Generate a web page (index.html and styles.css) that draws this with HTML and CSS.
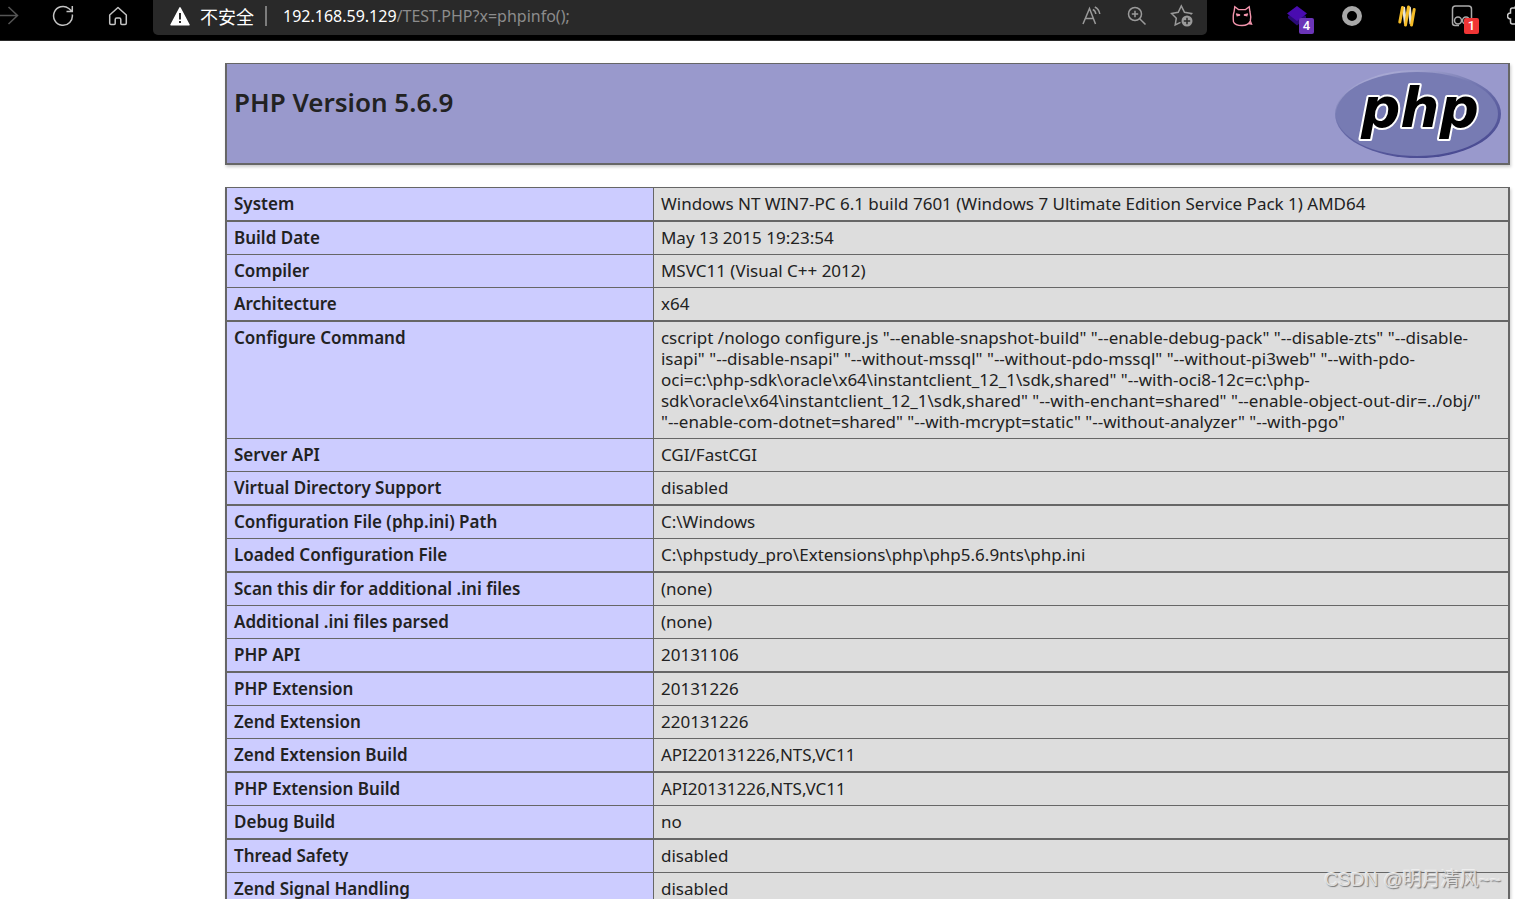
FILE: index.html
```html
<!DOCTYPE html>
<html lang="zh-CN">
<head>
<meta charset="utf-8">
<title>phpinfo()</title>
<link rel="stylesheet" href="styles.css">
</head>
<body>
<header class="toolbar">
  <nav class="nav">
    <button class="nav-btn forward" aria-label="前进"><svg width="20" height="20" viewBox="0 0 20 20"><path d="M-2 9.500H17.500M8.500 1L17.500 9.500L8.500 18" stroke="#555"/></svg></button>
    <button class="nav-btn reload" aria-label="刷新"><svg width="22" height="22" viewBox="0 0 22 22"><path d="M20.300 9.500A9.400 9.400 0 1 1 16.800 3.500L20 6.300M20.300 1V6.500H14.500"/></svg></button>
    <button class="nav-btn home" aria-label="主页"><svg width="20" height="20" viewBox="0 0 20 20"><path d="M10 1.500L1.700 9V17.300Q1.700 18.500 2.900 18.500H6.200Q7.200 18.500 7.200 17.500V13.500Q7.200 12 8.700 12H11.300Q12.800 12 12.800 13.500V17.500Q12.800 18.500 13.800 18.500H17.100Q18.300 18.500 18.300 17.300V9Z" stroke-linejoin="round"/></svg></button>
  </nav>
  <div class="address">
    <svg class="warning" width="20" height="19" viewBox="0 0 20 19"><path d="M10 0.800L19 17.800H1Z" fill="#fff" stroke="#fff" stroke-width="1.500" stroke-linejoin="round"/><path d="M10 6V12.500M10 14V16" stroke="#292929" stroke-width="2"/></svg>
    <span class="insecure">不安全</span>
    <span class="divider"></span>
    <label class="host" for="url">192.168.59.129</label>
    <input class="path" id="url" type="text" value="/TEST.PHP?x=phpinfo();">
    <button class="field-btn" aria-label="大声朗读"><svg width="22" height="20" viewBox="0 0 22 20"><path d="M2 18L8.500 2.500L14.500 18M4.200 12.500H12.500M11.800 3.500Q14.500 4.800 14.800 8M13.800 1Q18 3 18.800 8"/></svg></button>
    <button class="field-btn" aria-label="缩放"><svg width="20" height="20" viewBox="0 0 20 20"><circle cx="8" cy="8" r="6.500"/><path d="M12.700 12.700L18.500 18.500M8 4.800V11.200M4.800 8H11.200"/></svg></button>
    <button class="field-btn" aria-label="添加到收藏夹"><svg width="24" height="24" viewBox="0 0 24 24"><path d="M20.500 10.500L21.500 9.500L14.500 8.300L11.300 2L8.200 8.300L1.500 9.500L6.300 14.200L5.200 21L10.500 18.300"/><circle cx="17" cy="17" r="5.500" fill="#9a9a9a" stroke="none"/><path d="M17 13.800V20.200M13.800 17H20.200" stroke="#292929"/></svg></button>
  </div>
  <div class="extensions">
    <button class="ext" aria-label="猫"><svg width="24" height="24" viewBox="0 0 24 24"><path d="M3.500 18Q2.800 11 4 8L4.800 2.800L8.500 5.600H15.500L19.200 2.800L20 8Q21.300 13 20.300 17Q18.500 21.500 12 21.500Q5 21.500 3.500 18M20.300 17L21.500 20L18.500 19.500M6 10L10 11L6.500 11.800M18 10L14 11L17.500 11.800" stroke="#f294ac" stroke-width="1.400"/></svg></button>
    <button class="ext" aria-label="图层"><svg width="22" height="22" viewBox="0 0 22 22"><path d="M2 11L11 7L20 11V13L11 20.500L2 13Z" fill="#2a0a78" stroke="none"/><path d="M11 1L21 8.500L11 16L1 8.500Z" fill="#490bb0" stroke="none"/></svg><span class="badge purple">4</span></button>
    <button class="ext" aria-label="圆环"><svg width="22" height="22" viewBox="0 0 22 22"><circle cx="11" cy="11" r="7.500" stroke="#a8a8a8" stroke-width="5"/></svg></button>
    <button class="ext" aria-label="W"><svg width="20" height="22" viewBox="0 0 20 22"><path d="M6.500 2L8.500 19M12.300 2L14 19" stroke="#e8e5dc" stroke-width="3"/><path d="M5.500 2.500L2.800 17M11.500 2L8.500 20M17.200 4.500L14.500 20" stroke="#f6bd27" stroke-width="3" stroke-linecap="round"/></svg></button>
    <button class="ext" aria-label="脚本"><svg width="24" height="24" viewBox="0 0 24 24"><path d="M9 21.500H5Q2.500 21.500 2.500 19V5Q2.500 2 5.500 2H18.500Q21.500 2 21.500 5V15" stroke="#aaa"/><circle cx="8" cy="16.500" r="3.500" stroke="#aaa"/><circle cx="16" cy="16.500" r="3.500" stroke="#aaa"/></svg><span class="badge red">1</span></button>
    <button class="ext" aria-label="扩展"><svg width="20" height="22" viewBox="0 0 20 22"><path d="M3.500 8V5Q3.500 3 5.500 3H8A2.500 2.500 0 0 1 13 3H17V19H5.500Q3.500 19 3.500 17V14A3 3 0 0 1 3.500 8Z" stroke="#ccc"/></svg></button>
  </div>
</header>
<main class="center">
  <section class="banner">
    <h1>PHP Version 5.6.9</h1>
    <svg class="logo" width="168" height="90" viewBox="0 0 168 90" role="img" aria-label="PHP logo">
      <defs>
        <linearGradient id="rim" x1="0.200" y1="0" x2="0.700" y2="1"><stop offset="0" stop-color="#b5b5dc"/><stop offset="0.350" stop-color="#777bb3"/><stop offset="0.550" stop-color="#6265a4"/><stop offset="1" stop-color="#484991"/></linearGradient>
      </defs>
      <ellipse cx="84" cy="45" rx="83" ry="44" fill="url(#rim)"/>
      <ellipse cx="83" cy="45" rx="81" ry="42" fill="#777bb3"/>
      <text class="logo-text" x="27" y="58">php</text>
    </svg>
  </section>
  <table class="info">
    <tbody>
    <tr class="thick"><th scope="row">System</th><td>Windows NT WIN7-PC 6.1 build 7601 (Windows 7 Ultimate Edition Service Pack 1) AMD64</td></tr>
    <tr><th scope="row">Build Date</th><td>May 13 2015 19:23:54</td></tr>
    <tr><th scope="row">Compiler</th><td>MSVC11 (Visual C++ 2012)</td></tr>
    <tr class="thick"><th scope="row">Architecture</th><td>x64</td></tr>
    <tr><th scope="row">Configure Command</th><td>cscript /nologo configure.js "--enable-snapshot-build" "--enable-debug-pack" "--disable-zts" "--disable-<br>isapi" "--disable-nsapi" "--without-mssql" "--without-pdo-mssql" "--without-pi3web" "--with-pdo-<br>oci=c:\php-sdk\oracle\x64\instantclient_12_1\sdk,shared" "--with-oci8-12c=c:\php-<br>sdk\oracle\x64\instantclient_12_1\sdk,shared" "--with-enchant=shared" "--enable-object-out-dir=../obj/"<br>"--enable-com-dotnet=shared" "--with-mcrypt=static" "--without-analyzer" "--with-pgo"</td></tr>
    <tr><th scope="row">Server API</th><td>CGI/FastCGI</td></tr>
    <tr class="thick"><th scope="row">Virtual Directory Support</th><td>disabled</td></tr>
    <tr><th scope="row">Configuration File (php.ini) Path</th><td>C:\Windows</td></tr>
    <tr class="thick"><th scope="row">Loaded Configuration File</th><td>C:\phpstudy_pro\Extensions\php\php5.6.9nts\php.ini</td></tr>
    <tr><th scope="row">Scan this dir for additional .ini files</th><td>(none)</td></tr>
    <tr><th scope="row">Additional .ini files parsed</th><td>(none)</td></tr>
    <tr class="thick"><th scope="row">PHP API</th><td>20131106</td></tr>
    <tr><th scope="row">PHP Extension</th><td>20131226</td></tr>
    <tr><th scope="row">Zend Extension</th><td>220131226</td></tr>
    <tr class="thick"><th scope="row">Zend Extension Build</th><td>API220131226,NTS,VC11</td></tr>
    <tr><th scope="row">PHP Extension Build</th><td>API20131226,NTS,VC11</td></tr>
    <tr class="thick"><th scope="row">Debug Build</th><td>no</td></tr>
    <tr><th scope="row">Thread Safety</th><td>disabled</td></tr>
    <tr><th scope="row">Zend Signal Handling</th><td>disabled</td></tr>
    </tbody>
  </table>
</main>
<div class="watermark">CSDN @明月清风~~</div>
</body>
</html>
```

FILE: styles.css
```css
* { box-sizing: border-box; }
body {
  margin: 0;
  height: 100vh;
  overflow: hidden;
  position: relative;
  background: #fff;
  color: #222;
  font-family: "Noto Sans", "Open Sans", "Noto Sans CJK SC", sans-serif;
}
button {
  display: flex;
  align-items: center;
  justify-content: center;
  padding: 0;
  border: 0;
  background: none;
}
svg { flex: none; fill: none; stroke: #c4c4c4; stroke-width: 1.5; }

.toolbar {
  display: flex;
  height: 41px;
  background: #000;
  border-bottom: 1px solid #2b2b2b;
}
.nav { display: flex; flex: none; width: 153px; height: 32px; }
.nav-btn { width: 55px; }
.nav-btn.forward { width: 35px; justify-content: flex-start; }
.address {
  display: flex;
  align-items: center;
  flex: 1;
  height: 35px;
  padding: 0 3px 3px 17px;
  border-radius: 0 0 5px 5px;
  background: #292929;
}
.warning { stroke: none; }
.insecure {
  margin-left: 10px;
  color: #fff;
  font: 18px/24px "Noto Sans CJK SC", sans-serif;
}
.divider { width: 2px; height: 20px; margin: 0 16px 0 11px; background: #7c7c7c; }
.host, .path { font-size: 16px; line-height: 24px; color: #fff; }
.path {
  flex: 1;
  min-width: 0;
  padding: 0;
  border: 0;
  outline: 0;
  background: none;
  color: #8c8c8c;
  font-family: inherit;
}
.field-btn { width: 45px; height: 32px; }
.field-btn svg { stroke: #9a9a9a; }
.extensions { display: flex; flex: none; width: 308px; height: 32px; padding-left: 7px; }
.ext { position: relative; flex: none; width: 55px; }
.badge {
  position: absolute;
  left: 30px;
  top: 18px;
  width: 15px;
  height: 16px;
  border-radius: 2px;
  color: #fff;
  font: 500 13px/16px Roboto, sans-serif;
}
.purple { background: #6b35b8; }
.red { background: #f03535; }

.center { margin: 22px 5px 0 225px; }
.banner {
  display: flex;
  justify-content: space-between;
  padding: 5px 6px 4px 7px;
  border: 2px solid #666;
  border-top-width: 1px;
  background: #9999cc;
  box-shadow: 1px 2px 3px #ccc;
}
h1 { margin: 15px 0 0; font-size: 26px; line-height: 36px; font-weight: 600; }
.logo { stroke: none; }
.logo-text {
  font: italic bold 55px "DejaVu Sans", sans-serif;
  fill: #000;
  stroke: #fff;
  stroke-width: 4px;
  stroke-linejoin: round;
  paint-order: stroke;
}
.info {
  width: 100%;
  margin-top: 22px;
  table-layout: fixed;
  border-collapse: separate;
  border-spacing: 0;
  border: 2px solid #666;
  border-top-width: 1px;
  box-shadow: 1px 2px 3px #ccc;
  font-size: 17px;
  line-height: 21px;
}
th, td { padding: 5px 7px 6px; border-bottom: 1px solid #666; vertical-align: top; }
th {
  width: 33.33%;
  border-right: 1px solid #666;
  background: #ccccff;
  text-align: left;
  font-weight: 600;
}
td { background: #ddd; white-space: nowrap; }
.thick > * { border-bottom-width: 2px; }

.watermark {
  position: absolute;
  right: 14px;
  bottom: 5px;
  color: #ddd;
  font: 19px/28px "Liberation Sans", "Noto Sans CJK SC", sans-serif;
  text-shadow: 1px 1px 1px #777, -1px -1px 0 #eee;
}
```
